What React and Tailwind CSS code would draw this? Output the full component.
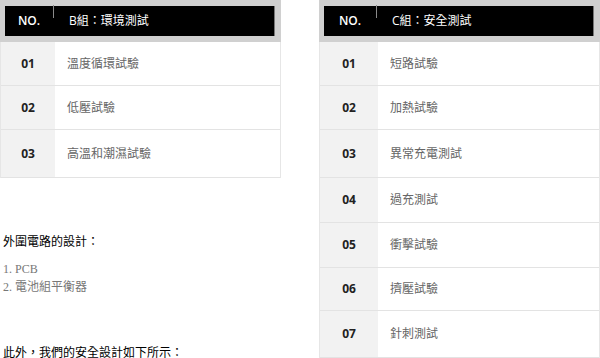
import React from "react";

const groupB = {
  title: "B組：環境測試",
  rows: [
    { no: "01", name: "溫度循環試驗", h: "h-[44px]" },
    { no: "02", name: "低壓試驗", h: "h-[44px]" },
    { no: "03", name: "高溫和潮濕試驗", h: "h-[48px]" },
  ],
};

const groupC = {
  title: "C組：安全測試",
  rows: [
    { no: "01", name: "短路試驗", h: "h-[44px]" },
    { no: "02", name: "加熱試驗", h: "h-[44px]" },
    { no: "03", name: "異常充電測試", h: "h-[48px]" },
    { no: "04", name: "過充測試", h: "h-[45px]" },
    { no: "05", name: "衝擊試驗", h: "h-[45px]" },
    { no: "06", name: "擠壓試驗", h: "h-[43px]" },
    { no: "07", name: "針刺測試", h: "h-[47px]" },
  ],
};

const sans = "font-['Open_Sans','Noto_Sans_CJK_TC',sans-serif]";

const TestTable = ({ group, noWidth, headWidth }) => (
  <div className="w-[281px]">
    <div className="h-[42px] bg-[#d0d0d0] pt-[6px] pl-[5px] pr-[6px] pb-[6px]">
      <div className="flex h-[30px] bg-black border-r border-[#777]">
        <div className={`${headWidth} flex items-center justify-center text-white text-[12px] font-semibold ${sans}`}>
          NO.
        </div>
        <div className="w-px h-[13px] bg-[#8a8a8a] -mt-px" />
        <div className={`flex items-center pl-[15px] text-white text-[12px] ${sans}`}>
          {group.title}
        </div>
      </div>
    </div>
    <div className="border-x border-[#e6e6e6]">
      {group.rows.map((r) => (
        <div key={r.no} className={`flex ${r.h} border-b border-[#e3e3e3]`}>
          <div className={`${noWidth} shrink-0 bg-[#f2f2f2] flex items-center justify-center text-[12px] font-bold text-[#222] ${sans}`}>
            {r.no}
          </div>
          <div className={`flex items-center pl-[12px] text-[12px] text-[#666] ${sans}`}>
            {r.name}
          </div>
        </div>
      ))}
    </div>
  </div>
);

const App = () => {
  return (
    <div className="w-[600px] h-[358px] overflow-hidden bg-white flex gap-[38px]">
      <div className="w-[281px]">
        <TestTable group={groupB} noWidth="w-[54px]" headWidth="w-[48px]" />
        <div className={`mt-[55px] pl-[3px] text-[12px] leading-[18px] text-black ${sans}`}>
          外圍電路的設計：
        </div>
        <div className="mt-[9px] pl-[3px] text-[12px] leading-[18px] text-[#777] font-['Liberation_Serif','Noto_Sans_CJK_TC',serif]">
          <div>1. PCB</div>
          <div>2. 電池組平衡器</div>
        </div>
        <div className={`mt-[48px] pl-[3px] text-[12px] leading-[18px] text-black ${sans}`}>
          此外，我們的安全設計如下所示：
        </div>
      </div>
      <TestTable group={groupC} noWidth="w-[58px]" headWidth="w-[52px]" />
    </div>
  );
};

export default App;
